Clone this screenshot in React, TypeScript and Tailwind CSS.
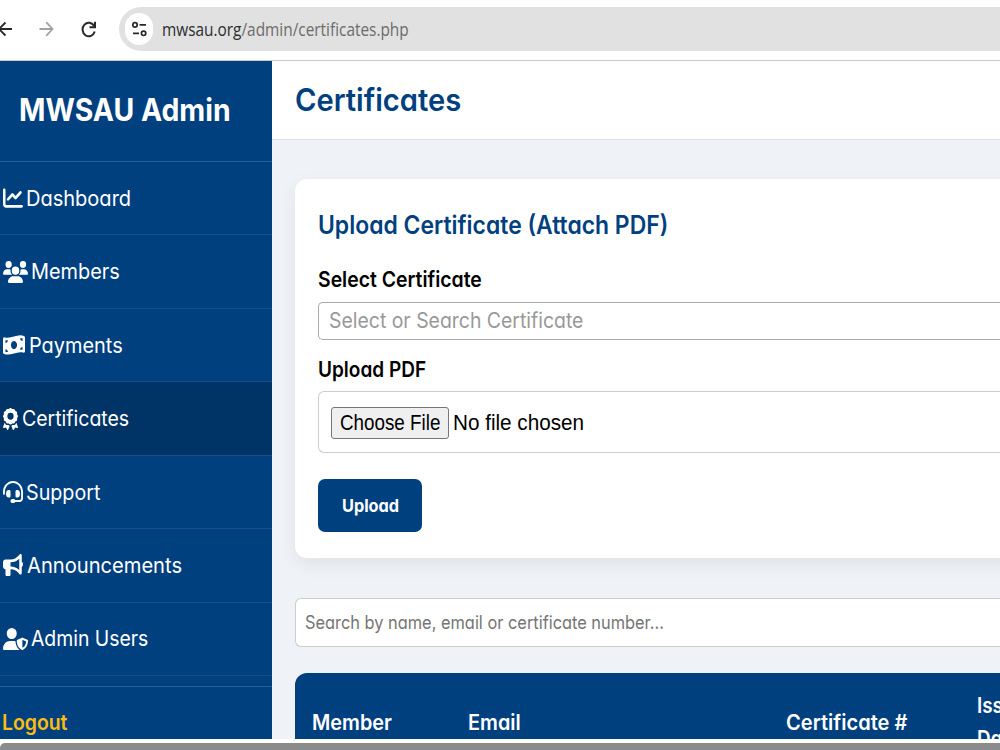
import type { ReactNode } from "react";
import type { IconType } from "react-icons";
import {
  FaAward,
  FaBullhorn,
  FaChartLine,
  FaHeadset,
  FaMoneyBillWave,
  FaUserShield,
  FaUsers,
} from "react-icons/fa6";

const brandFont = "font-['Inter','Liberation_Sans',sans-serif] [font-feature-settings:'cv11']";

function Text({ className, children }: { className: string; children: ReactNode }) {
  return <span className={`inline-block origin-left whitespace-nowrap ${className}`}>{children}</span>;
}

type NavItem = { label: string; icon: IconType; iconClass: string; textClass: string; active?: boolean };

const navItems: NavItem[] = [
  { label: "Dashboard", icon: FaChartLine, iconClass: "w-5", textClass: "ml-[3.500px] scale-x-[0.94]" },
  { label: "Members", icon: FaUsers, iconClass: "w-[25px]", textClass: "ml-[3px] scale-x-[0.935]" },
  { label: "Payments", icon: FaMoneyBillWave, iconClass: "w-[22px]", textClass: "ml-[4px] scale-x-[0.935]" },
  { label: "Certificates", icon: FaAward, iconClass: "w-[15px]", textClass: "ml-[4px] scale-x-[0.915]", active: true },
  { label: "Support", icon: FaHeadset, iconClass: "w-5", textClass: "ml-[3.500px] scale-x-[0.925]" },
  { label: "Announcements", icon: FaBullhorn, iconClass: "w-5", textClass: "ml-[4px] scale-x-[0.945]" },
  { label: "Admin Users", icon: FaUserShield, iconClass: "w-[25px]", textClass: "ml-[3.500px] scale-x-[0.91]" },
];

function BrowserBar() {
  return (
    <div className="flex h-[61px] shrink-0 items-start border-b border-[#c9c9c9] bg-white">
      <div className="flex h-[58px] w-[119px] shrink-0 items-center">
        <svg className="h-4 w-[13px]" viewBox="0 0 13 16" fill="none" stroke="#26282b" strokeWidth="1.9">
          <path d="M12 8H-2M5.5 1.5-1 8l6.500 6.500" />
        </svg>
        <svg className="ml-[26px] h-4 w-[15px]" viewBox="0 0 15 16" fill="none" stroke="#a2a2a2" strokeWidth="1.8">
          <path d="M0.500 8H13.500M7.200 1.200 13.500 8 7.200 14.800" />
        </svg>
        <svg className="ml-[27px] h-[17px] w-4" viewBox="0 0 16 17" fill="none" stroke="#26282b" strokeWidth="2">
          <path d="M13.200 5.200A6.200 6.800 0 1 0 13.700 10.500" />
          <path d="M14 0.800V6.200H8.500" />
        </svg>
      </div>
      <div className="mt-[7px] flex h-11 flex-1 items-center rounded-l-full bg-[#e1e1e1] pl-[6px]">
        <div className="flex h-8 w-7 shrink-0 items-center justify-center rounded-full bg-white">
          <svg className="h-4 w-[15px]" viewBox="0 0 15 16" fill="none" stroke="#26282b" strokeWidth="1.700">
            <circle cx="3" cy="3.900" r="2.200" />
            <path d="M7.500 3.900H14M1 12.300H7" />
            <circle cx="11.600" cy="12.300" r="2.200" />
          </svg>
        </div>
        <Text className="ml-[9px] scale-x-[0.855] font-['Open_Sans',sans-serif] text-[18px] text-[#2b2d30]">
          mwsau.org<span className="text-[#6c6c6c]">/admin/certificates.php</span>
        </Text>
      </div>
    </div>
  );
}

function Sidebar() {
  return (
    <aside className="flex w-[272px] shrink-0 flex-col bg-[#00407f] text-white">
      <div className="flex h-[101px] shrink-0 items-center border-b border-[#265d92] pb-[2px] pl-[19px]">
        <Text className="scale-x-[0.915] text-[31px] font-bold">MWSAU Admin</Text>
      </div>
      <nav className="flex shrink-0 flex-col">
        {navItems.map(({ label, icon: Icon, iconClass, textClass, active }) => (
          <a
            key={label}
            className={`flex h-[73.450px] items-center border-b border-[#194f88] pl-[2.500px] ${active ? "bg-[#003366]" : ""}`}
          >
            <Icon preserveAspectRatio="none" className={`h-[22px] shrink-0 ${iconClass}`} />
            <Text className={`mt-px text-[21.300px] ${textClass}`}>{label}</Text>
          </a>
        ))}
      </nav>
      <div className="mt-[10px] flex h-[73px] shrink-0 items-center border-t border-[#265d92] pl-[2px]">
        <Text className="scale-x-[0.91] text-[21.300px] font-semibold text-[#fdbc11]">Logout</Text>
      </div>
    </aside>
  );
}

function UploadCard() {
  return (
    <section className="mt-[39px] -mr-8 flex h-[379px] shrink-0 flex-col items-start rounded-l-[12px] bg-white pl-[23px] shadow-[0_6px_18px_rgba(0,0,0,0.07)]">
      <h2 className="mt-[29px] h-[34px] text-[25px] leading-[34px] font-semibold text-[#00407f]">
        <Text className="scale-x-[0.917]">Upload Certificate (Attach PDF)</Text>
      </h2>
      <label className="mt-[22px] h-[30px] text-[21.500px] leading-[30px] font-semibold text-black">
        <Text className="scale-x-[0.903]">Select Certificate</Text>
      </label>
      <div className="mt-[8px] flex h-[38px] w-full items-center rounded-l-[5px] border border-r-0 border-[#aaaaaa] pl-[10px]">
        <Text className="scale-x-[0.912] text-[21.300px] text-[#999999]">Select or Search Certificate</Text>
      </div>
      <label className="mt-[14px] h-[30px] text-[21.500px] leading-[30px] font-semibold text-black">
        <Text className="scale-x-[0.885]">Upload PDF</Text>
      </label>
      <div className="mt-[7px] flex h-[62px] w-full items-center rounded-l-[6px] border border-r-0 border-[#cccccc] pl-3">
        <div className="mt-px flex h-8 w-[118px] shrink-0 items-center rounded-[3px] border border-[#767676] bg-[#efefef] pb-px pl-2">
          <Text className="scale-x-[0.855] font-['Liberation_Sans',sans-serif] text-[22px] text-black">Choose File</Text>
        </div>
        <Text className="ml-1 scale-x-[0.94] font-['Liberation_Sans',sans-serif] text-[22px] text-black">
          No file chosen
        </Text>
      </div>
      <button className="mt-[26px] flex h-[53px] w-[104px] items-center rounded-[7px] bg-[#00407f] pl-[23.500px] text-[18px] font-bold text-white">
        <Text className="scale-x-[0.905]">Upload</Text>
      </button>
    </section>
  );
}

function Content() {
  return (
    <main className="flex min-w-0 flex-1 flex-col overflow-hidden bg-[#eff2f7]">
      <header className="flex h-[79px] shrink-0 items-center border-b border-[#dddddd] bg-white pl-[22.500px]">
        <h1 className="text-[31px] font-semibold text-[#00407f]">
          <Text className="scale-x-[0.94]">Certificates</Text>
        </h1>
      </header>
      <div className="flex flex-col pl-[23px]">
        <UploadCard />
        <div className="mt-[40px] flex h-[49px] shrink-0 items-center rounded-l-[6px] border border-r-0 border-[#cccccc] bg-white pl-[9px]">
          <Text className="scale-x-[0.89] text-[18.400px] text-[#757575]">
            Search by name, email or certificate number...
          </Text>
        </div>
        <div className="mt-[26px] grid h-[98px] shrink-0 grid-cols-[156px_318px_191px_40px] items-center rounded-tl-[12px] bg-[#00407f] pl-[17px] text-[21px] leading-[33px] font-semibold text-white">
          <Text className="scale-x-[0.945]">Member</Text>
          <Text className="scale-x-[0.945]">Email</Text>
          <Text className="scale-x-[0.955]">Certificate #</Text>
          <Text className="scale-x-[0.9]">
            Issue
            <br />
            Date
          </Text>
        </div>
      </div>
    </main>
  );
}

export default function App() {
  return (
    <div className={`flex h-[750px] w-[1000px] flex-col overflow-hidden bg-white ${brandFont}`}>
      <BrowserBar />
      <div className="flex h-[678px] shrink-0 overflow-hidden">
        <Sidebar />
        <Content />
      </div>
      <div className="mt-1 h-[7px] shrink-0 rounded-tl-[5px] bg-[#8b8b8b]" />
    </div>
  );
}
